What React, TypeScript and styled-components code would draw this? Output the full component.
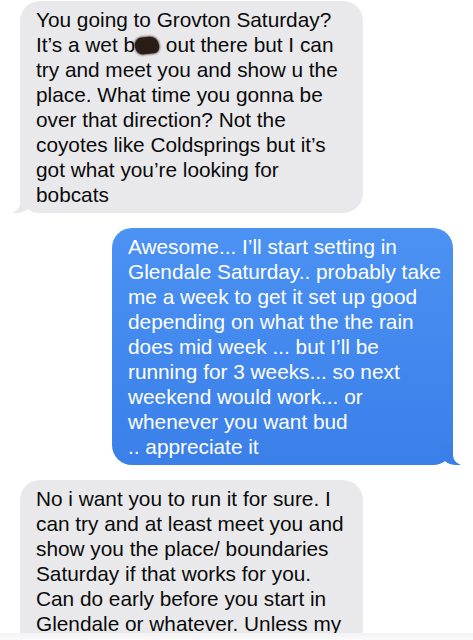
import React from "react";
import styled, { createGlobalStyle, css } from "styled-components";

const Global = createGlobalStyle`
  html, body { margin: 0; padding: 0; background: #ffffff; }
  body { font-family: "Liberation Sans", Arial, sans-serif; }
`;

const Page = styled.div`
  width: 473px;
  height: 640px;
  display: flex;
  flex-direction: column;
  overflow: hidden;
  background: #ffffff;
`;

const Thread = styled.div`
  flex: 1;
  overflow: hidden;
  display: flex;
  flex-direction: column;
  gap: 15px;
  padding: 1px 0 0 0;
`;

const Footer = styled.div`
  height: 7px;
  background: linear-gradient(#f3f3f3, #fafafa);
`;

const Bubble = styled.div<{ $mine?: boolean }>`
  position: relative;
  box-sizing: border-box;
  border-radius: 20px;
  padding: 6px 12px 6px 16px;
  font-size: 20.8px;
  line-height: 25px;
  white-space: pre-line;
  flex-shrink: 0;
  ${(p) =>
    p.$mine
      ? css`
          align-self: flex-end;
          margin-right: 20px;
          width: 341px;
          color: #ffffff;
          background: linear-gradient(180deg, #4b92f3 0%, #3b7fe9 100%);
          &::before {
            content: "";
            position: absolute;
            bottom: 0;
            right: -7px;
            width: 20px;
            height: 20px;
            background: #3b7fe9;
            border-bottom-left-radius: 15px;
          }
          &::after {
            content: "";
            position: absolute;
            bottom: 0;
            right: -26px;
            width: 26px;
            height: 20px;
            background: #ffffff;
            border-bottom-left-radius: 10px;
          }
        `
      : css`
          align-self: flex-start;
          margin-left: 20px;
          width: 343px;
          min-height: 170px;
          color: #0a0a0a;
          background: #e9e9eb;
          &::before {
            content: "";
            position: absolute;
            bottom: 0;
            left: -7px;
            width: 20px;
            height: 20px;
            background: #e9e9eb;
            border-bottom-right-radius: 15px;
          }
          &::after {
            content: "";
            position: absolute;
            bottom: 0;
            left: -26px;
            width: 26px;
            height: 20px;
            background: #ffffff;
            border-bottom-right-radius: 10px;
          }
        `}
`;

const Redact = styled.span`
  display: inline-block;
  width: 24px;
  height: 17px;
  margin-right: 1px;
  vertical-align: -2px;
  background: #2a1d18;
  border-radius: 7px 9px 6px 8px;
  box-shadow: 0 0 2px 1px rgba(60, 30, 20, 0.6);
  transform: rotate(-6deg);
`;

export default function App() {
  return (
    <>
      <Global />
      <Page>
        <Thread>
          <Bubble>
            {"You going to Grovton Saturday?\nIt\u2019s a wet b"}
            <Redact />
            {" out there but I can\ntry and meet you and show u the\nplace. What time you gonna be\nover that direction? Not the\ncoyotes like Coldsprings but it\u2019s\ngot what you\u2019re looking for\nbobcats"}
          </Bubble>
          <Bubble $mine>
            {"Awesome... I\u2019ll start setting in\nGlendale Saturday.. probably take\nme a week to get it set up good\ndepending on what the the rain\ndoes mid week ... but I\u2019ll be\nrunning for 3 weeks... so next\nweekend would work... or\nwhenever you want bud\n.. appreciate it"}
          </Bubble>
          <Bubble>
            {"No i want you to run it for sure. I\ncan try and at least meet you and\nshow you the place/ boundaries\nSaturday if that works for you.\nCan do early before you start in\nGlendale or whatever. Unless my"}
          </Bubble>
        </Thread>
        <Footer />
      </Page>
    </>
  );
}
